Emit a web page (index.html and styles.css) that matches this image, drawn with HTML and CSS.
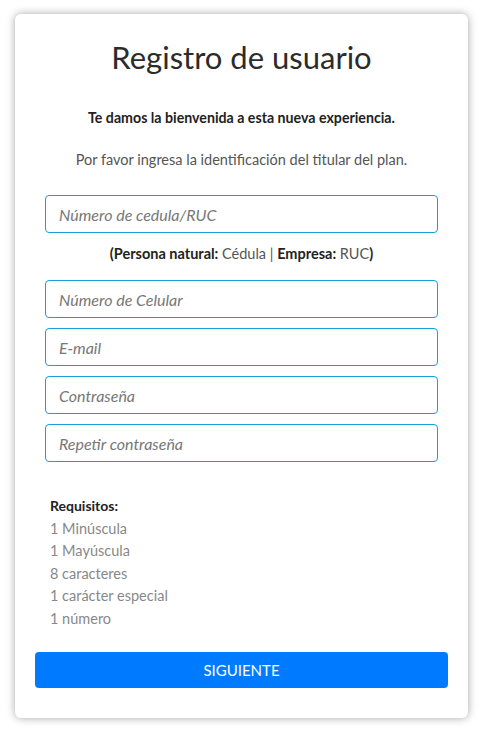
FILE: index.html
```html
<!DOCTYPE html>
<html lang="es">
<head>
    <meta charset="UTF-8">
    <title>Registro de usuario</title>
    <link rel="stylesheet" href="styles.css">
</head>
<body>
<div class="card">
    <h1 class="title">Registro de usuario</h1>
    <p class="welcome">Te damos la bienvenida a esta nueva experiencia.</p>
    <p class="intro">Por favor ingresa la identificación del titular del plan.</p>

    <div class="fields">
        <input class="field" type="text" placeholder="Número de cedula/RUC"/>
        <p class="hint"><b>(Persona natural:</b> Cédula <span class="sep">|</span> <b>Empresa:</b> RUC<b>)</b></p>
        <input class="field" type="text" placeholder="Número de Celular"/>
        <input class="field" type="email" placeholder="E-mail"/>
        <input class="field" type="password" placeholder="Contraseña"/>
        <input class="field" type="password" placeholder="Repetir contraseña"/>
    </div>

    <ul class="reqs">
        <li class="reqs-title">Requisitos:</li>
        <li>1 Minúscula</li>
        <li>1 Mayúscula</li>
        <li>8 caracteres</li>
        <li>1 carácter especial</li>
        <li>1 número</li>
    </ul>

    <button class="next">SIGUIENTE</button>
</div>
</body>
</html>
```

FILE: styles.css
```css
*{
    margin:0;
    padding:0;
    box-sizing:border-box;
    list-style-type:none;
}
body{
    background:#fff;
    font-family:"Lato","Open Sans",sans-serif;
    padding:14px 14px 14px 15px;
}
.card{
    width:453px;
    height:704px;
    background:#fff;
    border-radius:6px;
    box-shadow:0 0 8px rgba(0,0,0,0.35);
    padding:0 20px;
    display:flex;
    flex-direction:column;
}
.title{
    font-size:31px;
    font-weight:400;
    color:#2b2b2b;
    text-align:center;
    margin-top:24px;
    line-height:38px;
}
.welcome{
    font-size:14.2px;
    font-weight:700;
    color:#222;
    text-align:center;
    margin-top:33px;
    line-height:18px;
}
.intro{
    font-size:14.5px;
    color:#555;
    text-align:center;
    margin-top:24px;
    line-height:18px;
}
.fields{
    padding:0 10px;
    margin-top:26px;
    display:flex;
    flex-direction:column;
    gap:10px;
}
.field{
    width:100%;
    height:38px;
    border:1px solid #1a9ddb;
    border-radius:4px;
    padding:0 13px;
    font-family:inherit;
    font-size:16px;
    outline:none;
}
.field::placeholder{
    font-style:italic;
    color:#777;
}
.hint{
    font-size:14.5px;
    color:#555;
    text-align:center;
    line-height:18px;
    margin:2px 0 7px;
}
.hint b{
    color:#222;
    font-weight:700;
}
.hint .sep{
    color:#555;
}
.reqs{
    margin-top:33px;
    padding-left:15px;
    font-size:14.5px;
    color:#888;
}
.reqs li{
    line-height:22.5px;
}
.reqs .reqs-title{
    color:#222;
    font-weight:700;
    font-size:14px;
}
.next{
    margin-top:22px;
    height:36px;
    width:100%;
    border:none;
    border-radius:4px;
    background:#007bff;
    color:#fff;
    font-family:inherit;
    font-size:15px;
    cursor:pointer;
}
```
